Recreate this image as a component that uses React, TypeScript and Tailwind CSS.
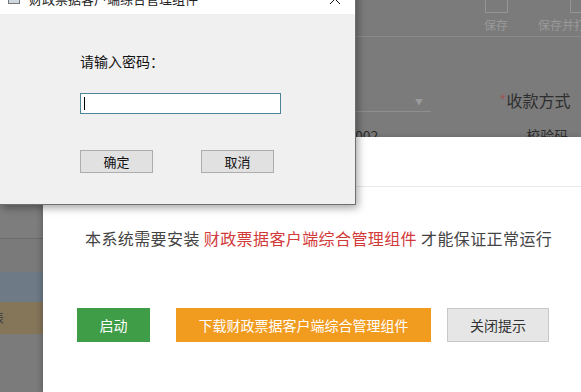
const cjk = { fontFamily: '"Noto Sans CJK SC", "Microsoft YaHei", sans-serif' }

function BackPage() {
  return (
    <div className="absolute inset-0 bg-[#7b7b7b]" style={cjk}>
      {/* toolbar */}
      <div className="h-[37px] border-b border-[#8a8a8a] flex pl-[473px] gap-[19px]">
        <div className="flex flex-col items-center w-[46px] shrink-0">
          <div className="w-[23px] h-[13px] border border-t-0 border-[#959595]" />
          <span className="text-[12px] text-[#999] leading-[14px] mt-[5px]">保存</span>
        </div>
        <div className="flex flex-col items-start w-[60px] shrink-0">
          <div className="ml-[32px] w-[12px] h-[13px] border border-t-0 border-r-0 border-[#959595]" />
          <span className="text-[12px] text-[#999] leading-[14px] mt-[5px] whitespace-nowrap">保存并打</span>
        </div>
      </div>
      {/* form row */}
      <div className="flex items-end h-[76px] pl-[355px]">
        <div className="w-[76px] h-[1px] bg-[#8f8f8f] mb-[1px] relative">
          <span className="absolute right-[8px] -top-[15px] text-[8px] text-[#9a9a9a]">▼</span>
        </div>
        <div className="ml-[68px] mb-[4px] text-[16px] text-[#2e2e2e] leading-[18px] whitespace-nowrap">
          <span className="text-[#9a5a5a]">*</span>收款方式
        </div>
      </div>
      <div className="flex pl-[355px] text-[14px] text-[#2e2e2e] leading-[16px] mt-[14px]">
        <span>002</span>
        <span className="ml-[148px]">校验码</span>
      </div>
      {/* left table strip */}
      <div className="absolute left-0 top-[205px] w-[43px] bottom-0 flex flex-col">
        <div className="h-[34px] border-b border-[#6c6c6c] bg-[#7d7d7d]" />
        <div className="h-[33px] bg-[#7a7a7a]" />
        <div className="h-[30px] bg-[#6e7a86]" />
        <div className="h-[32px] bg-[#85765a] flex items-center text-[12px] text-[#3a3a3a] -ml-[8px]">表</div>
        <div className="flex-1 bg-[#7b7b7b]" />
      </div>
    </div>
  )
}

function Notice() {
  return (
    <div
      className="absolute left-[43px] top-[137px] right-0 bottom-0 bg-white shadow-[-2px_0_6px_rgba(0,0,0,0.2)] flex flex-col"
      style={cjk}
    >
      <div className="h-[50px] border-b border-[#e9e9e9]" />
      <p className="mt-[40px] pl-[42px] text-[16px] tracking-[0.4px] leading-[22px] text-[#444] whitespace-nowrap">
        本系统需要安装 <span className="text-[#d23a3a]">财政票据客户端综合管理组件</span> 才能保证正常运行
      </p>
      <div className="mt-[59px] pl-[34px] flex items-center">
        <button className="w-[73px] h-[34px] bg-[#3f9c47] text-white text-[14px]">启动</button>
        <button className="ml-[26px] w-[255px] h-[34px] bg-[#f29c1f] text-white text-[14px]">
          下载财政票据客户端综合管理组件
        </button>
        <button className="ml-[16px] w-[102px] h-[34px] bg-[#e6e6e6] border border-[#c8c8c8] text-[#333] text-[14px]">
          关闭提示
        </button>
      </div>
    </div>
  )
}

function PasswordDialog() {
  return (
    <div
      className="absolute left-0 top-[-16px] w-[356px] h-[221px] bg-[#f0f0f0] border-r border-b border-[#6f6f6f] shadow-[2px_3px_8px_rgba(0,0,0,0.35)] flex flex-col"
      style={cjk}
    >
      <div className="h-[30px] bg-white flex items-center pl-[8px] pr-[10px]">
        <div className="w-[12px] h-[10px] border border-[#777] bg-[#cfd8e0] mr-[9px]" />
        <span className="text-[13px] text-[#222] flex-1 whitespace-nowrap">财政票据客户端综合管理组件</span>
        <svg width="12" height="12" viewBox="0 0 12 12" className="mr-[4px]">
          <path d="M1 1L11 11M11 1L1 11" stroke="#111" strokeWidth="1" />
        </svg>
      </div>
      <div className="pl-[80px] pt-[38px] flex flex-col">
        <span className="text-[14px] text-[#111] leading-[18px]">请输入密码：</span>
        <div className="mt-[23px] w-[201px] h-[21px] border border-[#4f8396] bg-white flex items-center pl-[3px]">
          <div className="w-[1px] h-[13px] bg-black" />
        </div>
        <div className="mt-[36px] flex gap-[48px]">
          <button className="w-[73px] h-[23px] bg-[#e1e1e1] border border-[#adadad] text-[13px] text-[#111] leading-[20px]">
            确定
          </button>
          <button className="w-[73px] h-[23px] bg-[#e1e1e1] border border-[#adadad] text-[13px] text-[#111] leading-[20px]">
            取消
          </button>
        </div>
      </div>
    </div>
  )
}

export default function App() {
  return (
    <div className="relative w-[581px] h-[392px] overflow-hidden">
      <BackPage />
      <Notice />
      <PasswordDialog />
    </div>
  )
}
